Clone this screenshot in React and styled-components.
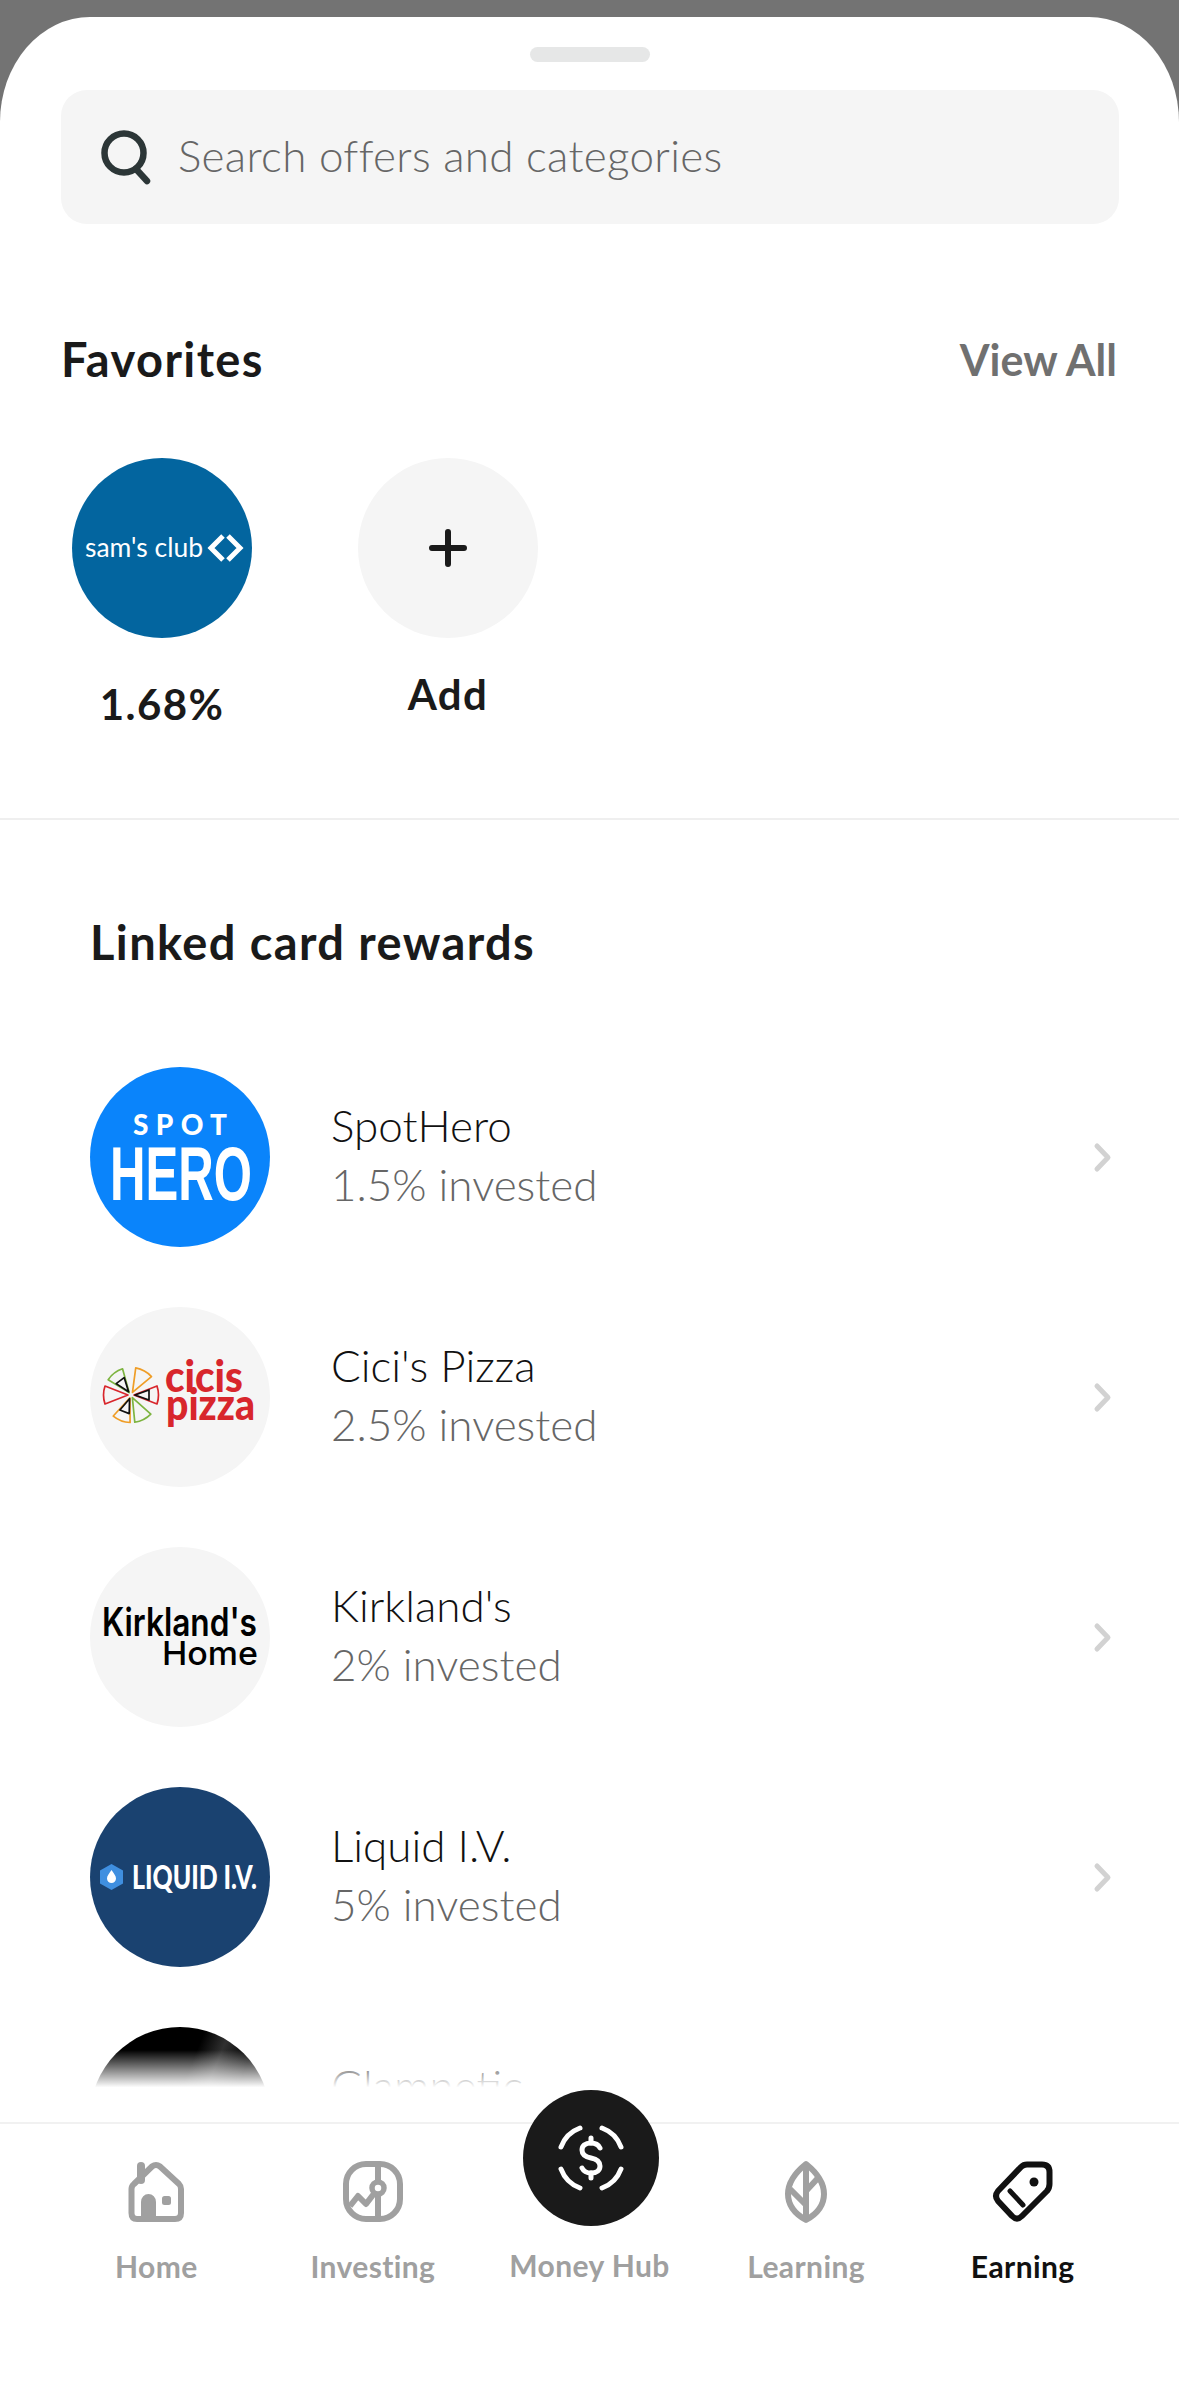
import React from 'react';
import styled, { createGlobalStyle } from 'styled-components';

const GlobalStyle = createGlobalStyle`
    html, body, #root {
        margin: 0;
        height: 100%;
    }
    body {
        font-family: Lato, "Open Sans", sans-serif;
        background: #737373;
    }
    svg {
        overflow: visible;
    }
`

const Page = styled.div`
    height: 100vh;
    padding-top: 17px;
    box-sizing: border-box;
    display: flex;
    flex-direction: column;
    overflow: hidden;
`
const Sheet = styled.div`
    flex: 1;
    min-height: 0;
    display: flex;
    flex-direction: column;
    background: #fff;
    border-radius: 90px 90px 0 0 / 105px 105px 0 0;
`
const Handle = styled.div`
    width: 120px;
    height: 15px;
    margin: 30px auto 0;
    border-radius: 8px;
    background: #e6e7e7;
`
const SearchBar = styled.div`
    height: 134px;
    margin: 28px 60px 0 61px;
    padding-left: 40px;
    display: flex;
    align-items: center;
    gap: 27px;
    border-radius: 26px;
    background: #f5f5f5;
`
const SearchText = styled.div`
    font-size: 44px;
    font-weight: 300;
    letter-spacing: 0.3px;
    padding-bottom: 4px;
    color: #666;
`
const FavHeader = styled.div`
    margin: 100px 62px 0 61px;
    height: 70px;
    display: flex;
    align-items: center;
    justify-content: space-between;
`
const Title = styled.div`
    font-size: 47px;
    font-weight: 700;
    letter-spacing: 1.4px;
    color: #1a1a1a;
`
const ViewAll = styled.div`
    font-size: 43px;
    font-weight: 700;
    color: #707070;
`
const FavRow = styled.div`
    margin: 64px 0 0 72px;
    display: flex;
    gap: 106px;
    height: 360px;
`
const FavItem = styled.div`
    width: 180px;
    display: flex;
    flex-direction: column;
    align-items: center;
`
const Circle = styled.div`
    flex: none;
    width: ${props => props.$size || 180}px;
    height: ${props => props.$size || 180}px;
    border-radius: 50%;
    background: ${props => props.$bg};
    display: flex;
    align-items: center;
    justify-content: center;
`
const FavLabel = styled.div`
    margin-top: ${props => props.$top}px;
    font-size: 42px;
    line-height: 50px;
    font-weight: 700;
    letter-spacing: 1.4px;
    color: #1a1a1a;
`
const Divider = styled.div`
    height: 2px;
    background: #efefef;
`
const LinkedTitle = styled(Title)`
    margin: 94px 0 0 90px;
    height: 56px;
    line-height: 56px;
`
const ScrollArea = styled.div`
    position: relative;
    flex: 1;
    min-height: 0;
    overflow: hidden;
    margin-top: 97px;
    padding: 0 67px 0 90px;
`
const Row = styled.div`
    height: 180px;
    margin-bottom: 60px;
    display: flex;
    align-items: center;
    gap: 61px;
`
const RowText = styled.div`
    flex: 1;
    margin-top: -6px;
`
const RowName = styled.div`
    font-size: 44px;
    line-height: 60px;
    font-weight: 300;
    color: #111;
`
const RowSub = styled.div`
    font-size: 44px;
    line-height: 58px;
    font-weight: 300;
    color: #666;
`
const Fade = styled.div`
    position: absolute;
    left: 0;
    right: 0;
    bottom: 0;
    height: 72px;
    background: linear-gradient(to bottom, rgba(255,255,255,0) 0%, #fff 52%);
`
const TabBar = styled.div`
    flex: none;
    height: 274px;
    box-sizing: border-box;
    padding: 37px 48px 0;
    border-top: 2px solid #f1f1f1;
    background: #fff;
    display: grid;
    grid-template-columns: repeat(5, 1fr);
    align-items: start;
`
const Tab = styled.div`
    display: flex;
    flex-direction: column;
    align-items: center;
    color: ${props => props.$active ? '#111' : '#a0a0a0'};
`
const TabIcon = styled.div`
    height: 62px;
    display: flex;
    align-items: center;
    justify-content: center;
`
const HubCircle = styled(Circle)`
    margin: -71px 0 -4px 3px;
    position: relative;
    z-index: 1;
`
const TabLabel = styled.div`
    margin-top: 24px;
    font-size: 30px;
    line-height: 38px;
    font-weight: 700;
    letter-spacing: 0.4px;
    white-space: nowrap;
`

const SearchIcon = () => (
    <svg width="50" height="54" viewBox="0 0 50 54" fill="none" stroke="#2c3637" strokeLinecap="round">
        <circle cx="23" cy="23" r="19.5" strokeWidth="6.5" />
        <path d="M35 39 L46 51" strokeWidth="6.5" />
    </svg>
)

const PlusIcon = () => (
    <svg width="38" height="38" viewBox="0 0 38 38" stroke="#1a1a1a" strokeWidth="6" strokeLinecap="round">
        <path d="M19 3 V35 M3 19 H35" />
    </svg>
)

const Chevron = () => (
    <svg width="18" height="29" viewBox="0 0 18 29" fill="none" stroke="#d2d2d2" strokeWidth="5" strokeLinecap="round" strokeLinejoin="round">
        <path d="M3 3 L14 14.5 L3 26" />
    </svg>
)

const SamsLogo = () => (
    <svg width="180" height="180" viewBox="0 0 180 180">
        <text x="13" y="99" fill="#fff" fontFamily="Lato" fontWeight="400" fontSize="27" textLength="118" lengthAdjust="spacingAndGlyphs">sam's club</text>
        <path d="M151 78 L139 90 L151 102 M156 78 L168 90 L156 102" fill="none" stroke="#fff" strokeWidth="5" />
    </svg>
)

const SpotHeroLogo = () => (
    <svg width="180" height="180" viewBox="0 0 180 180">
        <text x="43" y="68" fill="#fff" fontFamily="Lato" fontWeight="900" fontSize="28" textLength="94">SPOT</text>
        <text x="20" y="133" fill="#fff" fontFamily="Liberation Sans" fontWeight="700" fontSize="76" textLength="142" lengthAdjust="spacingAndGlyphs">HERO</text>
    </svg>
)

const wedges = [
    { angle: -37, color: '#7db440', inner: true },
    { angle: 29, color: '#ef9d26' },
    { angle: 90, color: '#d8262c', inner: true },
    { angle: 153, color: '#7db440' },
    { angle: 201, color: '#ef9d26', inner: true },
    { angle: 270, color: '#d8262c' },
]

const CicisLogo = () => (
    <svg width="180" height="180" viewBox="0 0 180 180">
        <g transform="translate(41 88)" fill="none" strokeWidth="1.7" strokeLinejoin="round">
            {wedges.map(w => (
                <g key={w.angle} transform={`rotate(${w.angle})`}>
                    <path d="M0 -3 L-9 -26 Q0 -29 9 -26 Z" stroke={w.color} />
                    {w.inner && <path d="M0 -4 L-5 -18 L5 -18 Z" stroke="#111" />}
                </g>
            ))}
        </g>
        <text x="75" y="85" fill="#d8262c" fontFamily="Lato" fontWeight="900" fontSize="44" textLength="78" lengthAdjust="spacingAndGlyphs">cicis</text>
        <text x="76" y="113" fill="#d8262c" fontFamily="Lato" fontWeight="900" fontSize="44" textLength="89" lengthAdjust="spacingAndGlyphs">pizza</text>
    </svg>
)

const KirklandsLogo = () => (
    <svg width="180" height="180" viewBox="0 0 180 180">
        <text x="12" y="89" fill="#000" fontFamily="Inter" fontWeight="600" fontSize="39" textLength="155" lengthAdjust="spacingAndGlyphs">Kirkland's</text>
        <text x="72" y="118" fill="#000" fontFamily="Inter" fontWeight="500" fontSize="33" textLength="96" lengthAdjust="spacingAndGlyphs">Home</text>
    </svg>
)

const LiquidLogo = () => (
    <svg width="180" height="180" viewBox="0 0 180 180">
        <path d="M21.5 77 L33 83.5 V96.5 L21.5 103 L10 96.5 V83.5 Z" fill="#3f8fe0" />
        <path d="M21.5 83 C24 86.5 26 89 26 91.5 A4.5 4.5 0 0 1 17 91.5 C17 89 19 86.5 21.5 83 Z" fill="#fff" />
        <text x="42" y="102" fill="#fff" fontFamily="Lato" fontWeight="900" fontSize="33" textLength="125" lengthAdjust="spacingAndGlyphs">LIQUID I.V.</text>
    </svg>
)

const GlamLogo = styled(Circle)`
    background: linear-gradient(112deg, #000 46%, #303030 56%, #000 68%);
`

const HomeIcon = () => (
    <svg width="56" height="62" viewBox="0 0 56 62" fill="none" stroke="currentColor" strokeWidth="6" strokeLinejoin="round">
        <path d="M24 5.5 Q28 2.5 32 5.5 L51 23 Q53 25 53 28 V52 Q53 58 47 58 H9 Q3.5 58 3.5 52 V28 Q3.5 25 6 23 Z" />
        <path d="M13 5 V19" strokeWidth="8" strokeLinecap="round" />
        <path d="M13 60 V41 A7.5 8 0 0 1 28 41 V60 Z" fill="currentColor" stroke="none" />
        <rect x="34" y="35" width="9" height="9" rx="2.5" fill="currentColor" stroke="none" />
    </svg>
)

const InvestIcon = () => (
    <svg width="60" height="62" viewBox="0 0 60 62" fill="none" stroke="currentColor" strokeWidth="6" strokeLinejoin="round">
        <rect x="3" y="3" width="54" height="55" rx="20" />
        <path d="M35 3 V58" />
        <path d="M7 45 L15 35 L23 43 L33 30" />
        <circle cx="35" cy="27" r="6" fill="#fff" strokeWidth="5.5" />
    </svg>
)

const LeafIcon = () => (
    <svg width="42" height="62" viewBox="0 0 42 62" fill="none" stroke="currentColor" strokeWidth="6" strokeLinejoin="round">
        <path d="M21 3 C31 11 39 21 39 33 C39 46 30 54 21 59 C12 54 3 46 3 33 C3 21 11 11 21 3 Z" />
        <path d="M21 3 V59 M5 28 L21 44 M21 30 L33 17" />
    </svg>
)

const TagIcon = () => (
    <svg width="60" height="62" viewBox="0 0 60 62" fill="none" stroke="currentColor" strokeLinejoin="round" strokeLinecap="round">
        <path d="M28 6 Q30.5 3.5 34 3.5 H49 Q56.5 3.5 56.5 11 V23 Q56.5 27 54 30 L29 55 Q24 60 19 55 L5 40 Q1 35 5 30 Z" strokeWidth="6" />
        <circle cx="41" cy="21" r="4.5" fill="currentColor" stroke="none" />
        <path d="M17 30 L30 44" strokeWidth="5" />
    </svg>
)

const HubIcon = () => (
    <svg width="80" height="80" viewBox="-40 -40 80 80" fill="none" stroke="#fff" strokeWidth="5" strokeLinecap="round">
        <path d="M-30 -11 A32 32 0 0 1 -11 -30 M11 -30 A32 32 0 0 1 30 -11 M30 11 A32 32 0 0 1 11 30 M-11 30 A32 32 0 0 1 -30 11" />
        <path d="M9 -10 C7 -14 4 -15 0 -15 C-6 -15 -9 -12 -9 -8 C-9 -3 -5 -1 0 0 C5 1 9 3 9 8 C9 12 6 15 0 15 C-4 15 -7 14 -9 10" />
        <path d="M0 -20 V-15 M0 15 V20" />
    </svg>
)

const rewards = [
    { name: 'SpotHero', rate: '1.5% invested', bg: '#0a84fb', Logo: SpotHeroLogo },
    { name: "Cici's Pizza", rate: '2.5% invested', bg: '#f5f5f5', Logo: CicisLogo },
    { name: "Kirkland's", rate: '2% invested', bg: '#f5f5f5', Logo: KirklandsLogo },
    { name: 'Liquid I.V.', rate: '5% invested', bg: '#1a4270', Logo: LiquidLogo },
]

const tabs = [
    { label: 'Home', Icon: HomeIcon },
    { label: 'Investing', Icon: InvestIcon },
    { label: 'Money Hub', hub: true },
    { label: 'Learning', Icon: LeafIcon },
    { label: 'Earning', Icon: TagIcon, active: true },
]

const App = () => (
    <Page>
        <GlobalStyle />
        <Sheet>
            <Handle />
            <SearchBar>
                <SearchIcon />
                <SearchText>Search offers and categories</SearchText>
            </SearchBar>

            <FavHeader>
                <Title>Favorites</Title>
                <ViewAll>View All</ViewAll>
            </FavHeader>
            <FavRow>
                <FavItem>
                    <Circle $bg="#03659f"><SamsLogo /></Circle>
                    <FavLabel $top={41}>1.68%</FavLabel>
                </FavItem>
                <FavItem>
                    <Circle $bg="#f5f5f5"><PlusIcon /></Circle>
                    <FavLabel $top={31}>Add</FavLabel>
                </FavItem>
            </FavRow>
            <Divider />

            <LinkedTitle>Linked card rewards</LinkedTitle>
            <ScrollArea>
                {rewards.map(({ name, rate, bg, Logo }) => (
                    <Row key={name}>
                        <Circle $bg={bg}><Logo /></Circle>
                        <RowText>
                            <RowName>{name}</RowName>
                            <RowSub>{rate}</RowSub>
                        </RowText>
                        <Chevron />
                    </Row>
                ))}
                <Row>
                    <GlamLogo />
                    <RowText>
                        <RowName>Glamnetic</RowName>
                        <RowSub>3% invested</RowSub>
                    </RowText>
                    <Chevron />
                </Row>
                <Fade />
            </ScrollArea>

            <TabBar>
                {tabs.map(({ label, Icon, hub, active }) => (
                    <Tab key={label} $active={active}>
                        {hub ? (
                            <HubCircle $size={136} $bg="#1a1a1a"><HubIcon /></HubCircle>
                        ) : (
                            <TabIcon><Icon /></TabIcon>
                        )}
                        <TabLabel>{label}</TabLabel>
                    </Tab>
                ))}
            </TabBar>
        </Sheet>
    </Page>
)

export default App;
